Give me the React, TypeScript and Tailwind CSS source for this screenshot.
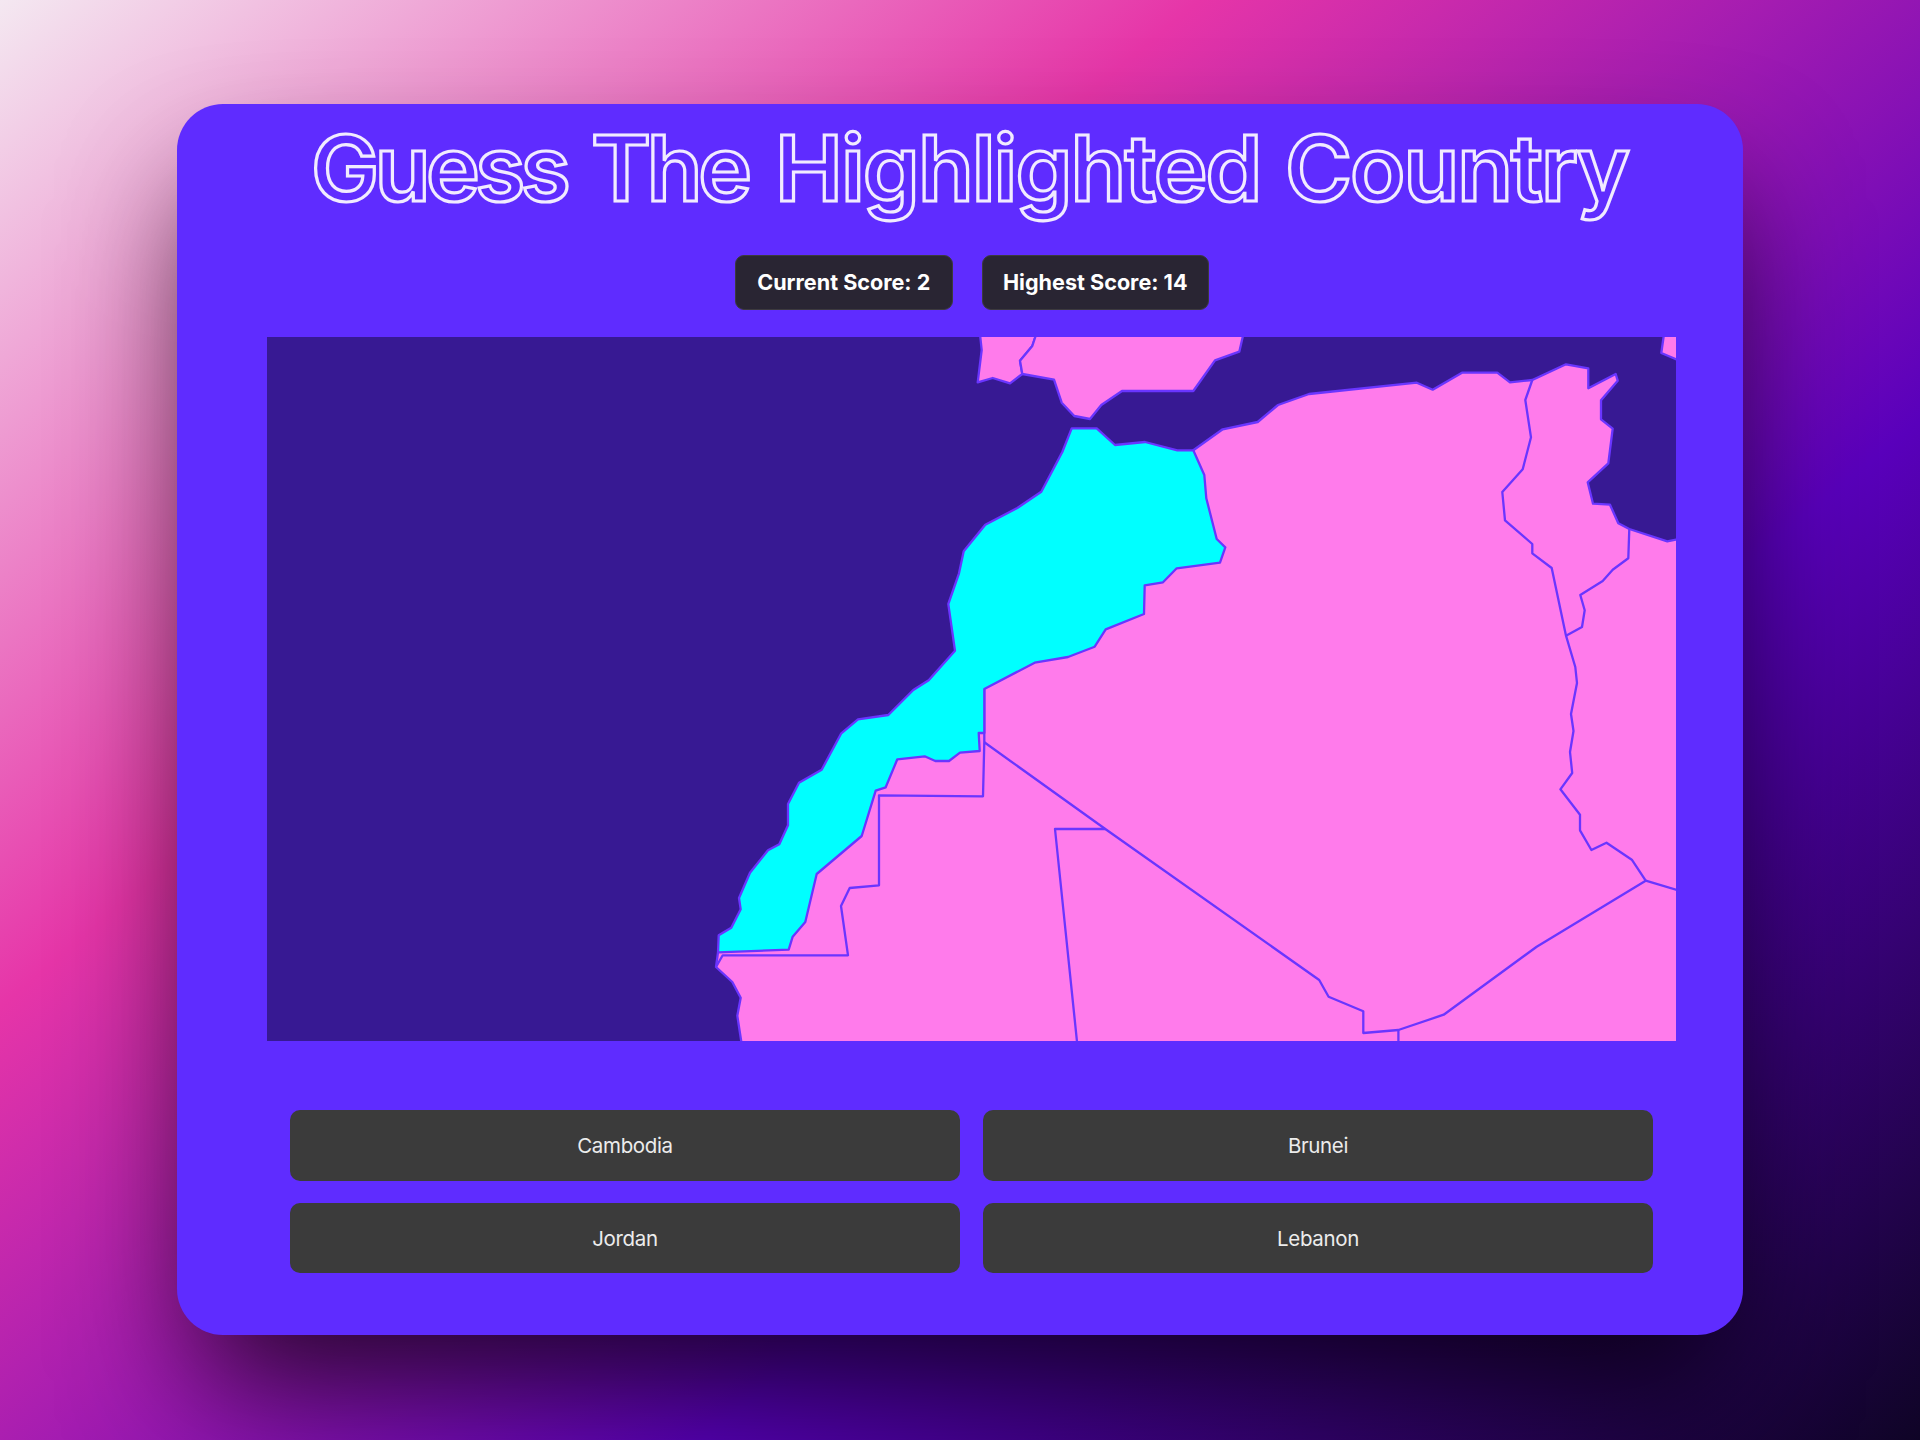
import React from "react";

const MOROCCO =
  "1071.7,428.3 1096.7,428.3 1115,445 1145,442 1177.3,450.3 1193.3,450.3 1204.3,475 1206.3,498.3 1216.7,539 1225.3,547.3 1220,562.7 1176.7,568.3 1163,582.3 1144.7,585.3 1144,614 1105.7,629.4 1094.7,646.7 1068,657 1034.7,662.7 984.3,689 984.3,733 978.7,733 979.7,751 960,752.7 949,761 935.3,761 924.7,756.3 897.3,759.3 885.7,787.3 875.7,790.7 861.7,836 816.7,874 805.3,922 792.7,936.7 788.7,949.7 718,952.3 718.7,935.3 731.3,927.7 740.7,909.3 739,898 750,872.7 768,850.3 779.3,844.3 788,825.3 788,804 799,782.7 821.7,769.7 841.3,733.3 858,719.3 888.3,715 913.3,690 928.7,680.3 955,650.7 948.3,604 959,573.3 963.7,551.3 985.3,524.7 1017.3,508 1041.3,491.7 1062.3,452";

const LANDS = [
  // Portugal
  "980,327 980.3,337 981.7,350 977.7,382.3 992.7,378 1010,383.3 1022.3,374 1020,360.7 1032.3,346 1035.3,337 1038,327",
  // Spain
  "1038,327 1035.3,337 1032.3,346 1020,360.7 1022.3,374 1054,379.7 1061.7,402.7 1074.3,416 1090,419 1101.3,405 1122,391 1193.3,391 1215,360.3 1239.3,351.7 1242.7,337 1245,327",
  // Sicily
  "1665,327 1661.3,353 1676,359.3 1695,368 1695,327",
  // North-west Africa, closed underneath Morocco
  "1193.3,450.3 1222.7,429.3 1257.7,422 1278,405 1309,394 1416.8,382.7 1432.7,389.7 1462,372.7 1497.3,372.7 1510,382.3 1532.3,380 1566,364.3 1588.3,368.3 1588.3,388.3 1615.7,374 1617.7,380.7 1601,400.3 1601,419.3 1612.7,428.7 1608.3,463.3 1587.7,482.3 1593,503.7 1610,504.7 1618.3,523.3 1629.3,529 1667.3,541.3 1676,539.7 1695,536 1695,1060 744,1060 741.3,1041.7 737.3,1015.7 740.7,997.7 732.3,982 716,967 718,952.3 760,900 830,790 940,710 1100,560",
];

const BORDERS = [
  "716,967 722.7,955.3 848,955.3 841,906 849.7,888 879,885.3 879,795.3 983,796.3 984.3,742.3 984.3,689",
  "984.3,742.3 1105.3,829 1319.2,980 1328.6,996.7 1363.3,1011.3 1363.3,1033 1398.4,1030 1443.7,1014.7 1536.7,946.7 1645.7,880.7 1676,889.7 1695,895",
  "1105.3,829 1055,829 1077,1041.7 1079,1060",
  "1398.4,1030 1398.4,1060",
  "1645.7,880.7 1631.8,859.7 1606.5,842.7 1591.4,850 1580,830.3 1580,814.7 1560.4,789.3 1572.2,773 1570,752 1573.5,731 1571,714 1577,683 1575.3,667 1566,635.7 1551.7,568 1532.3,553.3 1532.3,544 1505,520.3 1502.3,492 1522.7,469.3 1531,437.3 1525.3,400 1532.3,380",
  "1629.3,529 1628.3,558.3 1612.7,569.7 1602.7,581 1580.3,595 1584.7,610.3 1582,627 1566,635.7",
];

function CountryMap() {
  return (
    <svg
      viewBox="267 337 1408.5 704"
      preserveAspectRatio="none"
      className="block h-[704px] w-[1408.5px] bg-[#371993]"
    >
      <g stroke="#6a35ff" strokeWidth="2.3" strokeLinejoin="round">
        {LANDS.map((p) => (
          <polygon key={p} points={p} fill="#ff7beb" />
        ))}
        {BORDERS.map((p) => (
          <polyline key={p} points={p} fill="none" />
        ))}
        <polygon points={MOROCCO} fill="#00ffff" />
      </g>
    </svg>
  );
}

function Score({ className, children }: { className: string; children: React.ReactNode }) {
  return (
    <div
      className={`flex h-[55px] items-center justify-center rounded-[9px] border border-[#3c3a3e] bg-[#292533] pt-px font-[Inter] text-[21.6px] font-bold whitespace-nowrap text-white ${className}`}
    >
      {children}
    </div>
  );
}

function Answer({ children }: { children: React.ReactNode }) {
  return (
    <button className="flex h-[70.5px] items-center justify-center rounded-[10px] bg-[#3b3b3b] pt-0.5 font-[Inter] text-[20.5px] tracking-[-0.35px] text-[#ececec]">
      {children}
    </button>
  );
}

export default function App() {
  return (
    <div className="flex h-[1440px] w-[1920px] flex-col overflow-hidden bg-[linear-gradient(140deg,#f4e8f1_0%,#e635a8_33%,#5900bb_66.6%,#0f0426_100%)] pt-[104px] pl-[177px] font-[Inter]">
      <main className="flex h-[1231px] w-[1566px] flex-col items-center rounded-[46px] bg-[#5f2cff] pr-[67px] pl-[90px] shadow-[0_70px_130px_-20px_rgba(0,0,0,0.76)]">
        <h1 className="mt-[9px] flex h-[110px] w-[1321px] text-[91px] leading-[110px] font-[570] whitespace-nowrap text-transparent [-webkit-text-stroke:3.2px_#f1ebff]">
          <span className="w-[280px] tracking-[-4.5px]">Guess</span>
          <span className="w-[184px] tracking-[-4.3px]">The</span>
          <span className="w-[510px] tracking-[-1.9px]">Highlighted</span>
          <span className="w-[347px] tracking-[-2px]">Country</span>
        </h1>
        <div className="mt-[31.5px] flex gap-[29px]">
          <Score className="w-[218.5px]">Current Score: 2</Score>
          <Score className="w-[226.5px]">Highest Score: 14</Score>
        </div>
        <div className="mt-[27.9px]">
          <CountryMap />
        </div>
        <div className="mt-[69px] grid w-[1363px] grid-cols-2 gap-x-[23px] gap-y-[22px]">
          <Answer>Cambodia</Answer>
          <Answer>Brunei</Answer>
          <Answer>Jordan</Answer>
          <Answer>Lebanon</Answer>
        </div>
      </main>
    </div>
  );
}
